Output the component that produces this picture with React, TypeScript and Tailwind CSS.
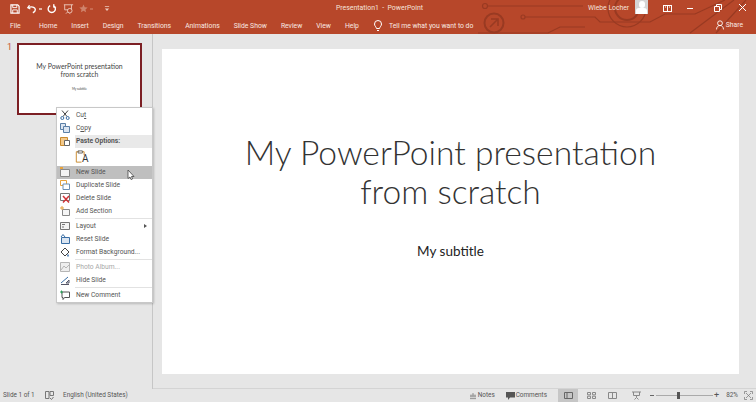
const sans = { fontFamily: 'Roboto, "Noto Sans", sans-serif' };
const lato = { fontFamily: 'Lato, "Open Sans", sans-serif' };

function Qat() {
  return (
    <div className="flex items-center h-[17px] pl-[10px] text-white w-[310px]">
      <svg width="10" height="10" viewBox="0 0 11 11" fill="none" stroke="white" strokeWidth="1.3"><path d="M1 1h7.500L10 2.500V10H1z" /><path d="M3 1v3h4.500V1M3 10V6.500h5V10" strokeWidth="1" /></svg>
      <svg width="10" height="10" viewBox="0 0 12 11" fill="none" stroke="white" strokeWidth="1.6" className="ml-[7px]"><path d="M3 1 1 4l3 1.500" /><path d="M1.500 4C5 2 10 3 10 6.500c0 2-1.500 3-3 3.500" /></svg>
      <span className="ml-[2px] w-[3px] h-[2px] bg-[#e4b6a4]" />
      <svg width="10" height="10" viewBox="0 0 11 11" fill="none" stroke="white" strokeWidth="1.500" className="ml-[5px]"><path d="M7 1.800a4 4 0 1 1-3.500 0" /><path d="M7.500 0v3.500H10" strokeWidth="1.200" /></svg>
      <svg width="11" height="12" viewBox="0 0 13 13" fill="none" stroke="#f0d2c6" strokeWidth="1" className="ml-[6px]"><path d="M1 1.500h11M2 1.500v6h8v-6M6 7.500v2M3.500 12l2.500-2.500L8.500 12" /><circle cx="8" cy="8.500" r="2.700" fill="#b9472a" /></svg>
      <svg width="9" height="9" viewBox="0 0 11 11" fill="#cf836c" className="ml-[5px]"><path d="m5.500.5 1.500 3.400 3.600.3-2.700 2.400.8 3.600-3.200-1.900-3.200 1.900.8-3.600L.4 4.200 4 3.900z" /></svg>
      <span className="ml-[2px] w-[3px] h-[2px] bg-[#c76a50]" />
      <svg width="6" height="7" viewBox="0 0 7 8" fill="#edc9bb" className="ml-[11px]"><path d="M1 1h5v1H1zM1 4h5L3.500 7z" /></svg>
    </div>
  );
}

function CircuitArt() {
  return (
    <svg className="absolute right-0 top-0 pointer-events-none" width="290" height="34" viewBox="466 0 290 34" fill="none" stroke="#993a22" strokeWidth="1.200">
      <circle cx="485" cy="6" r="2.500" />
      <path d="M488 6h95" />
      <circle cx="494" cy="23" r="9.500" strokeWidth="2" />
      <path d="m490 27 8-8M491 19h7v7" strokeWidth="1.600" />
      <circle cx="523" cy="17" r="2" />
      <path d="M525 17h70l5 5h50l15-8h30l30-14" />
      <path d="M478 33h70l12-6h25" />
      <circle cx="627" cy="8" r="12" strokeWidth="2" />
      <circle cx="627" cy="8" r="19" />
      <path d="m690 33 44-33M716 33l30-33" />
    </svg>
  );
}

function Header() {
  const tabs = ['Home', 'Insert', 'Design', 'Transitions', 'Animations', 'Slide Show', 'Review', 'View', 'Help'];
  return (
    <header className="relative h-[34px] bg-[#b7472a] text-white shrink-0 overflow-hidden" style={sans}>
      <CircuitArt />
      <div className="relative flex items-center h-[17px]">
        <Qat />
        <span className="absolute left-[336px] top-[1px] text-[6.900px] leading-[14px] text-[#f6e3dc] whitespace-nowrap">Presentation1 &nbsp;- &nbsp;PowerPoint</span>
        <span className="absolute left-[588px] top-[1px] text-[6.800px] leading-[14px] text-[#f6e3dc] whitespace-nowrap">Wiebe Locher</span>
        <div className="absolute left-[635px] top-0 w-[13px] h-[14px] bg-[#d5d5d5] overflow-hidden flex flex-col items-center">
          <span className="w-[6px] h-[7px] mt-[1px] rounded-full bg-white" />
          <span className="w-[11px] h-[6px] rounded-t-[3px] bg-white" />
        </div>
        <svg className="absolute left-[663px] top-[5px]" width="9" height="7" viewBox="0 0 9 7" fill="none" stroke="white"><rect x=".5" y=".5" width="8" height="6" /><path d="M4.500 1v5" /><path d="M2 2h1M6 2h1" /></svg>
        <span className="absolute left-[687px] top-[8px] w-[6px] h-[1px] bg-white" />
        <svg className="absolute left-[714px] top-[4px]" width="8" height="8" viewBox="0 0 8 8" fill="none" stroke="white"><path d="M.5 2.500h5v5h-5zM2.500 2V.5h5v5H6" /></svg>
        <svg className="absolute left-[738px] top-[3px]" width="9" height="9" viewBox="0 0 9 9" stroke="white"><path d="m1 1 7 7M8 1 1 8" /></svg>
      </div>
      <nav className="relative flex items-center h-[17px] pl-[10px] text-[6.800px] leading-[14px] text-[#f9e9e3]">
        <span className="w-[10px]">File</span>
        <span className="ml-[19px] flex gap-[14px]">
          {tabs.map((t) => <span key={t}>{t}</span>)}
        </span>
        <svg className="ml-[15px]" width="8" height="12" viewBox="0 0 8 12" fill="none" stroke="white"><path d="M2.500 8.500C2 6.500.5 6 .5 4a3.500 3.500 0 0 1 7 0c0 2-1.500 2.500-2 4.500zM3 10.500h2" /></svg>
        <span className="ml-[7px] text-[6.800px]">Tell me what you want to do</span>
        <span className="absolute right-[13px] top-[1px] flex items-center gap-[2px] text-[6.800px]">
          <svg width="8" height="10" viewBox="0 0 9 11" fill="none" stroke="white"><circle cx="4.500" cy="3.500" r="2.700" /><path d="M.5 10.500c.3-3 2-4.500 4-4.500s3.700 1.500 4 4.500" /></svg>
          Share
        </span>
      </nav>
    </header>
  );
}

function Thumb() {
  return (
    <div className="flex items-start pt-[9px] pl-[7px]">
      <span className="text-[9px] leading-[9px] text-[#c8542f] w-[10px]" style={sans}>1</span>
      <div className="w-[125px] h-[72px] bg-white border-2 border-[#7c1f24] flex flex-col items-center pt-[18px] text-[#444]" style={lato}>
        <p className="text-[6.900px] leading-[7.500px] text-center whitespace-nowrap">My PowerPoint presentation<br />from scratch</p>
        <p className="text-[3px] leading-[4px] mt-[9px]">My subtitle</p>
      </div>
    </div>
  );
}

function Ico({ c }: { c: string }) {
  const base = "w-[10px] h-[10px] block";
  if (c === 'cut') return <svg className={base} viewBox="0 0 10 10" fill="none" stroke="#444"><path d="m2 .5 5 6M8 .5l-5 6" /><circle cx="2.300" cy="8" r="1.500" stroke="#3a6ea5" /><circle cx="7.700" cy="8" r="1.500" stroke="#3a6ea5" /></svg>;
  if (c === 'copy') return <svg className={base} viewBox="0 0 10 10" fill="#dbe5f1" stroke="#5b7fa6"><path d="M.5.500h5v6h-5z" /><path d="M3.500 3.500h6v6h-6z" /></svg>;
  if (c === 'paste') return <svg className={base} viewBox="0 0 10 10" fill="#f3c98b" stroke="#c98a2e"><path d="M.5 1.500h7v8h-7z" /><path d="M4.500 4.500h5v5h-5z" fill="white" stroke="#666" /></svg>;
  if (c === 'new') return <svg className={base} viewBox="0 0 10 10" fill="#f4f4f4" stroke="#888"><path d="M.5 2.500h9v7h-9z" /><path d="M0 1h3" stroke="#e8a33d" strokeWidth="2" /></svg>;
  if (c === 'dup') return <svg className={base} viewBox="0 0 10 10" fill="#fff" stroke="#6b8fb5"><path d="M.5.500h6v5h-6z" stroke="#e8a33d" /><path d="M3 4h6.500v5.500H3z" /></svg>;
  if (c === 'del') return <svg className={base} viewBox="0 0 10 10" fill="#fff" stroke="#777"><path d="M.5.500h9v7h-9z" /><path d="m3 3 6 6.500M9 3 3 9.500" stroke="#d13438" strokeWidth="1.500" /></svg>;
  if (c === 'sec') return <svg className={base} viewBox="0 0 10 10" fill="#f6f6f6" stroke="#888"><path d="M2.500 3.500h7v6h-7z" /><path d="M0 2h4M2 0v4" stroke="#e8a33d" /></svg>;
  if (c === 'lay') return <svg className={base} viewBox="0 0 10 10" fill="#f4f4f4" stroke="#777"><path d="M.5 1.500h9v7h-9z" /><path d="M2 3.500h3M2 6h2" /></svg>;
  if (c === 'reset') return <svg className={base} viewBox="0 0 10 10" fill="#dbe5f1" stroke="#3a6ea5"><path d="M1.500 3.500h8v6h-8z" /><path d="M1 3 3 .5 5 3" fill="none" /></svg>;
  if (c === 'bg') return <svg className={base} viewBox="0 0 10 10" fill="#fff" stroke="#444"><path d="m1 5 4-4 4 4-4 4z" /><path d="M8 7.500v2" stroke="#3a6ea5" strokeWidth="1.500" /></svg>;
  if (c === 'photo') return <svg className={base} viewBox="0 0 10 10" fill="#eee" stroke="#b5b5b5"><path d="M.5.500h9v9h-9z" /><path d="m1 8 3-4 2 2 3-3" /></svg>;
  if (c === 'hide') return <svg className={base} viewBox="0 0 10 10" fill="#dbe5f1" stroke="#556"><path d="M1 9.500h8" /><path d="m1 8 7-6" stroke="#3a6ea5" /><path d="M6 8h3V5z" /></svg>;
  return <svg className={base} viewBox="0 0 10 10" fill="#fff" stroke="#555"><path d="M2 2h7.500v5.500H4.500L3 9.500v-2H2z" /><path d="M0 2h3M1.500.5v3" stroke="#2e9e5b" /></svg>;
}

function Item({ icon, children, hi, dim, arrow }: { icon: string; children: React.ReactNode; hi?: boolean; dim?: boolean; arrow?: boolean }) {
  return (
    <div className={`relative flex items-center h-[13px] ${hi ? 'bg-[#bfbfbf]' : ''}`}>
      <span className="w-[18px] pl-[3px] shrink-0"><Ico c={icon} /></span>
      <span className={`pl-[1px] text-[6.700px] leading-[10px] whitespace-nowrap ${dim ? 'text-[#a8a8a8]' : 'text-[#555]'} ${hi ? 'text-[#444]' : ''}`}>{children}</span>
      {arrow && <span className="absolute right-[5px] top-[4px] w-0 h-0 border-y-[2.500px] border-y-transparent border-l-[3px] border-l-[#555]" />}
    </div>
  );
}

const Sep = () => <div className="h-px bg-[#e2e2e2] ml-[18px] my-[0.500px]" />;

function Menu() {
  return (
    <div className="absolute left-[56px] top-[107px] w-[97px] h-[196px] bg-white border border-[#c8c8c8] shadow-[1px_1px_2px_rgba(0,0,0,0.2)] pt-[0.500px]" style={sans}>
      <Item icon="cut">Cu<span className="underline decoration-[0.500px] underline-offset-1">t</span></Item>
      <Item icon="copy">C<span className="underline decoration-[0.500px] underline-offset-1">o</span>py</Item>
      <div className="flex items-center h-[13px]">
        <span className="w-[18px] pl-[3px] shrink-0"><Ico c="paste" /></span>
        <span className="flex-1 h-full bg-[#e9e9e9] pl-[1px] text-[6.700px] leading-[13px] font-bold text-[#555]">Paste Options:</span>
      </div>
      <div className="h-[18px] pl-[18px] flex items-center">
        <svg width="13" height="15" viewBox="0 0 15 16" fill="none" stroke="#c98a2e" strokeWidth="1.100"><path d="M5 2.500H1.500v12h6M8 2.500h2.500v4" /><path d="M3.500 1.500h5v2.500h-5z" stroke="#666" /></svg>
        <span className="-ml-[6px] mt-[4px] text-[10px] leading-none text-[#333]">A</span>
      </div>
      <Item icon="new" hi>New Slide</Item>
      <Item icon="dup">Duplicate Slide</Item>
      <Item icon="del">Delete Slide</Item>
      <Item icon="sec">Add Section</Item>
      <Sep />
      <Item icon="lay" arrow>Layout</Item>
      <Item icon="reset">Reset Slide</Item>
      <Item icon="bg">Format Background...</Item>
      <Sep />
      <Item icon="photo" dim>Photo Album...</Item>
      <Item icon="hide">Hide Slide</Item>
      <Sep />
      <Item icon="com">New Comment</Item>
      <svg className="absolute left-[70px] top-[61px]" width="9" height="13" viewBox="0 0 9 13" fill="#fff" stroke="#444" strokeWidth=".8"><path d="M1 1v8.500l2-1.500 1 2.500 1.500-.5-1-2.500H7z" /></svg>
    </div>
  );
}

function Footer() {
  return (
    <footer className="h-[13px] shrink-0 bg-[#e6e6e6] text-[#555] flex items-center text-[6.400px] leading-[13px] relative" style={sans}>
      <span className="ml-[3px] w-[32px] whitespace-nowrap">Slide 1 of 1</span>
      <svg className="ml-[10px]" width="9" height="9" viewBox="0 0 9 9" fill="none" stroke="#777"><path d="M.5.500h3.500v7H.5zM5 .5h3.500v4H5z" /><path d="m5 7 1.500 1.500L8.500 6" /></svg>
      <span className="ml-[9px]">English (United States)</span>
      <div className="ml-auto flex items-center h-full">
        <svg width="6" height="8" viewBox="0 0 8 8" fill="none" stroke="#777"><path d="M0 7.500h8M0 5h8M0 3h8M4 3V0" /></svg>
        <span className="ml-[2px]">Notes</span>
        <svg className="ml-[11px]" width="9" height="8" viewBox="0 0 9 8" fill="#555"><path d="M0 0h9v5.500H4L2 8V5.500H0z" /></svg>
        <span className="ml-[1px]">Comments</span>
        <span className="ml-[11px] w-[20px] h-full bg-[#c6c6c6] flex items-center justify-center">
          <svg width="9" height="7" viewBox="0 0 9 7" fill="none" stroke="#666"><path d="M.5.500h8v6h-8zM3 .5v6" /></svg>
        </span>
        <svg className="ml-[9px]" width="9" height="7" viewBox="0 0 9 7" fill="none" stroke="#888"><path d="M.5.500h3v2.300h-3zM5.500.5h3v2.300h-3zM.5 4.200h3v2.300h-3zM5.500 4.200h3v2.300h-3z" /></svg>
        <svg className="ml-[12px]" width="9" height="7" viewBox="0 0 9 7" fill="none" stroke="#888"><path d="M.5.500h8v6h-8zM4.500.5v6" /></svg>
        <svg className="ml-[15px]" width="9" height="9" viewBox="0 0 9 9" fill="none" stroke="#888"><path d="M0 1h9M1.500 1v3.500h6V1M4.500 4.500v2M2.500 8.500l2-2 2 2" /></svg>
        <span className="ml-[9px] w-[4px] h-px bg-[#666]" />
        <div className="relative ml-[2px] w-[57px] h-px bg-[#aaa]">
          <span className="absolute left-[21px] -top-[3px] w-[3px] h-[7px] bg-[#555]" />
        </div>
        <span className="ml-[1px] text-[9px] leading-none">+</span>
        <span className="ml-[7px]">82%</span>
        <svg className="ml-[6px] mr-[3px]" width="9" height="9" viewBox="0 0 9 9" fill="none" stroke="#777"><path d="M.5 3V.5H3M6 .5h2.500V3M8.500 6v2.500H6M3 8.500H.5V6M2 2l5 5M7 2 2 7" strokeWidth=".7" /></svg>
      </div>
    </footer>
  );
}

export default function App() {
  return (
    <div className="relative w-[756px] h-[402px] flex flex-col overflow-hidden bg-[#e6e6e6]">
      <Header />
      <main className="flex flex-1 min-h-0">
        <aside className="w-[153px] shrink-0 border-r border-[#c6c6c6]">
          <Thumb />
        </aside>
        <section className="flex-1 pl-[9px] pr-[17px] pt-[15px] pb-[15px] border-b border-[#d4d4d4]">
          <div className="h-[325px] bg-white flex flex-col items-center pt-[84px] text-[#333]" style={lato}>
            <h1 className="text-[33.600px] leading-[39px] font-light text-center whitespace-nowrap">My PowerPoint presentation<br />from scratch</h1>
            <p className="text-[13.500px] leading-[18px] mt-[31px] text-[#222]">My subtitle</p>
          </div>
        </section>
      </main>
      <Footer />
      <Menu />
    </div>
  );
}
